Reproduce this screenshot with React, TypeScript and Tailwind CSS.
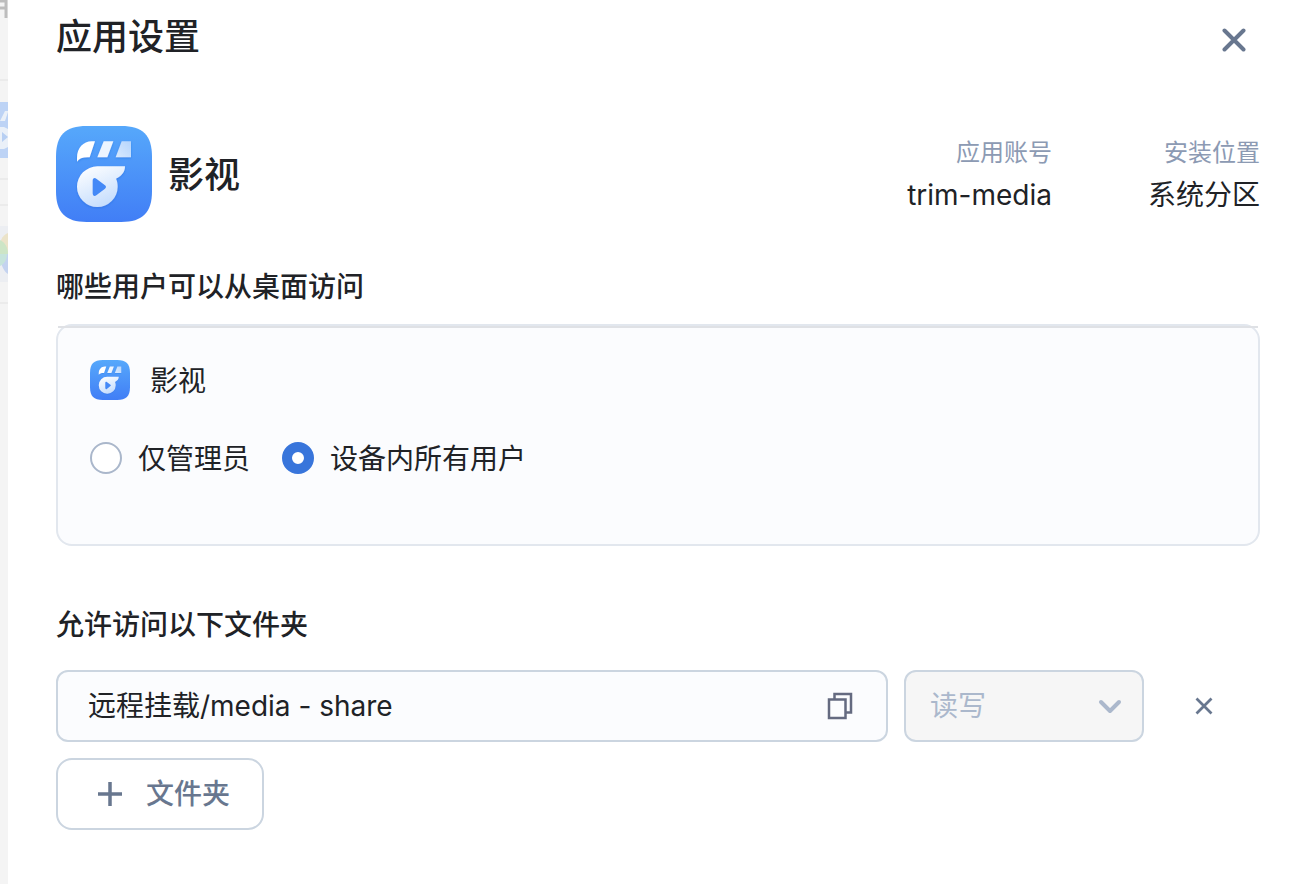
import { useId } from "react";

function MediaIcon({ className }: { className: string }) {
  const id = useId();
  const bg = `${id}-bg`;
  const body = `${id}-body`;
  const slate = `${id}-slate`;
  const shade = `${id}-shade`;
  return (
    <svg viewBox="0 0 288 288" className={className} aria-hidden="true">
      <defs>
        <linearGradient id={bg} x1="0" y1="0" x2="0" y2="1">
          <stop offset="0" stopColor="#56a8fb" />
          <stop offset="1" stopColor="#417ef6" />
        </linearGradient>
        <linearGradient id={body} x1="0.1" y1="0" x2="0.6" y2="1">
          <stop offset="0" stopColor="#ffffff" />
          <stop offset="1" stopColor="#c3dcfd" />
        </linearGradient>
        <linearGradient id={slate} x1="1" y1="0" x2="0" y2="1">
          <stop offset="0" stopColor="#b5d5fd" />
          <stop offset="1" stopColor="#d9eafe" />
        </linearGradient>
        <filter id={shade} x="-20%" y="-20%" width="140%" height="150%">
          <feDropShadow dx="0" dy="3" stdDeviation="3" floodColor="#1d5fd0" floodOpacity="0.4" />
        </filter>
      </defs>
      <path
        d="M0 92C0 28 28 0 92 0H196C260 0 288 28 288 92V196C288 260 260 288 196 288H92C28 288 0 260 0 196Z"
        fill={`url(#${bg})`}
      />
      <g filter={`url(#${shade})`}>
        <path d="M63 107V96C63 66 82 46 107 46H117L101 94H95C79 94 69 98 63 107Z" fill="#fff" />
        <path d="M143 46H172L154 94H124Z" fill="#edf5ff" />
        <path d="M197 46H225V94H179Z" fill={`url(#${slate})`} />
        <path
          d="M124 121H207C207 137 199 149 180 158C184 166 185 174 185 182A61 61 0 1 1 124 121Z"
          fill={`url(#${body})`}
        />
      </g>
      <path
        d="M110 164C110 157 115 154 121 158L147 178C151 181 151 185 147 188L121 208C115 212 110 209 110 202Z"
        fill="#4489f7"
      />
    </svg>
  );
}

function Backdrop() {
  return (
    <div className="relative w-2 shrink-0 overflow-hidden bg-[#f4f4f4]" aria-hidden="true">
      <svg viewBox="0 0 8 304" className="absolute top-0 left-0 h-[304px] w-2">
        <path d="M0 80H8M0 179H8M0 205H8M0 303H8" stroke="#ebebeb" strokeWidth="2" />
        <path d="M0 1H6M0 8H6M6 0V18" stroke="#bdbdbd" strokeWidth="3" fill="none" />
        <path d="M0 102H8V158H0Z" fill="#bdd3f5" />
        <path d="M5 111H8V112L5 121H0ZM0 127H4L8 129V147L4 149H0Z" fill="#eaf0f8" />
        <path d="M2 132L8 137L2 142Z" fill="#b7cff3" />
        <path d="M0 226H8V282H0Z" fill="#eceef2" />
        <path d="M1 240C3 236 5 234 8 233V254H0Z" fill="#ebe3c9" />
        <path d="M0 254H8V274C4 272 2 266 0 260Z" fill="#c4d3f0" />
        <path d="M0 240C5 242 8 248 8 254H0Z" fill="#cde5c6" />
        <path d="M0 254H7C7 260 4 264 0 266Z" fill="#c6e4dc" />
      </svg>
    </div>
  );
}

function Info({ label, value }: { label: string; value: string }) {
  return (
    <div className="text-right">
      <dt className="text-2xl leading-9 text-[#8c9ab3]">{label}</dt>
      <dd className="mt-1 text-[28px] leading-10">{value}</dd>
    </div>
  );
}

function Choice({ label, checked }: { label: string; checked?: boolean }) {
  return (
    <label className="flex items-center gap-4">
      <input
        type="radio"
        name="audience"
        defaultChecked={checked}
        className="size-8 appearance-none rounded-full border-2 border-[#aab7cb] bg-white checked:border-[10px] checked:border-[#3875db]"
      />
      <span className="pt-0.5 text-[28px] leading-10">{label}</span>
    </label>
  );
}

export default function App() {
  return (
    <div className="flex min-h-screen bg-white font-['Inter','Noto_Sans_CJK_SC',sans-serif] text-[#202226]">
      <Backdrop />
      <main className="min-w-0 flex-1 pr-11 pl-12">
        <header className="flex h-20 items-center justify-between">
          <h1 className="pb-1.5 text-4xl leading-12 font-medium">应用设置</h1>
          <button type="button" aria-label="关闭" className="flex size-13 items-center justify-center text-[#68778f]">
            <svg viewBox="0 0 24 24" className="size-6" fill="none" stroke="currentColor" strokeWidth="4" strokeLinecap="round">
              <path d="M2.5 2.5L21.5 21.5M21.5 2.5L2.5 21.5" />
            </svg>
          </button>
        </header>

        <section className="mt-[46px] flex items-center justify-between">
          <div className="flex items-center gap-4">
            <MediaIcon className="size-24" />
            <h2 className="pt-0.5 text-4xl leading-12 font-medium">影视</h2>
          </div>
          <dl className="flex gap-24 pt-0.5">
            <Info label="应用账号" value="trim-media" />
            <Info label="安装位置" value="系统分区" />
          </dl>
        </section>

        <section className="mt-11">
          <h3 className="text-[28px] leading-[42px] font-medium">哪些用户可以从桌面访问</h3>
          <div className="relative mt-4 rounded-2xl border-2 border-[#e2e7ee] bg-[#fbfcfe] px-8 pt-[33px] pb-[65px]">
            <div className="absolute inset-x-0 top-0 h-0.5 bg-[#dfe1e5]" />
            <div className="flex items-center gap-5">
              <MediaIcon className="size-10" />
              <span className="pt-0.5 text-[28px] leading-10">影视</span>
            </div>
            <div className="mt-9 flex gap-8">
              <Choice label="仅管理员" />
              <Choice label="设备内所有用户" checked />
            </div>
          </div>
        </section>

        <section className="mt-[58px] pb-12">
          <h3 className="text-[28px] leading-[42px] font-medium">允许访问以下文件夹</h3>
          <div className="mt-6 flex items-center gap-4">
            <div className="flex h-18 min-w-0 flex-1 items-center rounded-xl border-2 border-[#cbd5e0] bg-[#fbfcfe] pr-8 pl-[30px]">
              <input
                type="text"
                readOnly
                aria-label="文件夹路径"
                value="远程挂载/media - share"
                className="min-w-0 flex-1 bg-transparent text-[28px] leading-10 outline-none"
              />
              <button type="button" aria-label="复制路径" className="text-[#646a80]">
                <svg viewBox="0 0 28 28" className="size-7" fill="none" stroke="currentColor" strokeWidth="2.5">
                  <path d="M3 7.5H19.5V26H3Z" />
                  <path d="M8.5 7V2H25V20.5H20" />
                </svg>
              </button>
            </div>
            <div className="relative w-60">
              <select
                disabled
                aria-label="权限"
                className="h-18 w-full appearance-none rounded-xl border-2 border-[#cbd5e0] bg-[#f6f6f6] px-6 text-[28px] text-[#abb8cc] opacity-100"
              >
                <option>读写</option>
              </select>
              <svg
                viewBox="0 0 24 24"
                className="pointer-events-none absolute top-6 right-[22px] size-6 text-[#abb8cc]"
                fill="none"
                stroke="currentColor"
                strokeWidth="4"
                strokeLinecap="round"
                strokeLinejoin="round"
              >
                <path d="M3 8L12 17L21 8" />
              </svg>
            </div>
            <button type="button" aria-label="移除" className="mr-7 ml-4 flex size-14 items-center justify-center text-[#68778f]">
              <svg viewBox="0 0 18 18" className="size-[18px]" fill="none" stroke="currentColor" strokeWidth="2.75">
                <path d="M1.5 1.5L16.5 16.5M16.5 1.5L1.5 16.5" />
              </svg>
            </button>
          </div>
          <button
            type="button"
            className="mt-4 flex h-18 items-center gap-6 rounded-2xl border-2 border-[#cbd5e0] bg-white pr-8 pl-10 text-[#68778f]"
          >
            <svg viewBox="0 0 24 24" className="size-6" fill="none" stroke="currentColor" strokeWidth="3.5">
              <path d="M12 0V24M0 12H24" />
            </svg>
            <span className="text-[28px] leading-10 font-medium">文件夹</span>
          </button>
        </section>
      </main>
    </div>
  );
}
